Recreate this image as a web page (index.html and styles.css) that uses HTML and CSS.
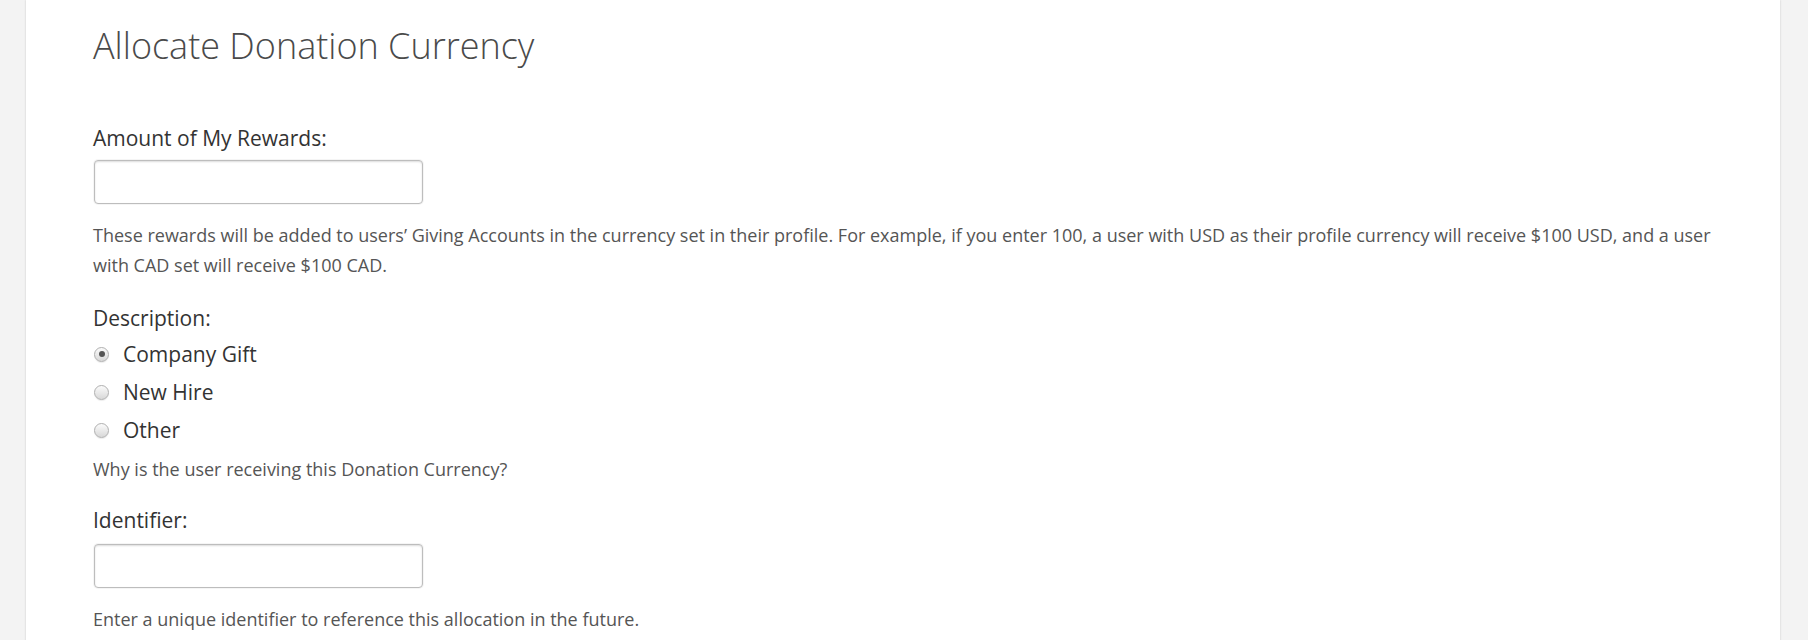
FILE: index.html
```html
<!DOCTYPE html>
<html lang="en">
<head>
<meta charset="utf-8">
<title>Allocate Donation Currency</title>
<link rel="stylesheet" href="styles.css">
</head>
<body>
<main class="panel">
  <h1 class="title">Allocate Donation Currency</h1>
  <form class="form">
    <div class="field">
      <label class="label" for="amount">Amount of My Rewards:</label>
      <input class="text-input" id="amount" type="text">
      <p class="help help-after-input">These rewards will be added to users’ Giving Accounts in the currency set in their profile. For example, if you enter 100, a user with USD as their profile currency will receive $100 USD, and a user with CAD set will receive $100 CAD.</p>
    </div>
    <div class="field field-desc">
      <div class="label">Description:</div>
      <ul class="radios">
        <li class="radio-row"><span class="radio checked"></span><span class="radio-label">Company Gift</span></li>
        <li class="radio-row"><span class="radio"></span><span class="radio-label">New Hire</span></li>
        <li class="radio-row"><span class="radio"></span><span class="radio-label">Other</span></li>
      </ul>
      <p class="help help-after-radios">Why is the user receiving this Donation Currency?</p>
    </div>
    <div class="field field-id">
      <label class="label" for="identifier">Identifier:</label>
      <input class="text-input" id="identifier" type="text">
      <p class="help help-after-input">Enter a unique identifier to reference this allocation in the future.</p>
    </div>
  </form>
</main>
</body>
</html>
```

FILE: styles.css
```css
html, body {
  margin: 0;
  padding: 0;
}
body {
  background: #f3f3f3;
  font-family: "Open Sans", "Noto Sans", sans-serif;
  color: #333;
  height: 640px;
  overflow: hidden;
}
.panel {
  margin: 0 28px 0 26px;
  background: #fff;
  box-shadow: 0 0 2px rgba(0, 0, 0, 0.18);
  padding: 26px 67px 40px;
  min-height: 640px;
  box-sizing: border-box;
}
.title {
  margin: 0;
  font-weight: 300;
  font-size: 36px;
  line-height: 40px;
  color: #4a4a4a;
}
.form {
  margin-top: 58px;
}
.field {
  display: flex;
  flex-direction: column;
  align-items: flex-start;
}
.label {
  font-size: 21px;
  line-height: 28px;
  color: #333;
}
.text-input {
  margin-top: 8px;
  margin-left: 1px;
  width: 329px;
  height: 44px;
  box-sizing: border-box;
  border: 1px solid #bdbdbd;
  border-radius: 4px;
  box-shadow: inset 0 1px 2px rgba(0, 0, 0, 0.14), 0 0 0 1px rgba(0, 0, 0, 0.04);
  background: #fff;
  font: inherit;
  font-size: 16px;
  padding: 0 10px;
}
.help {
  margin: 0;
  font-size: 18px;
  line-height: 30px;
  color: #555;
}
.help-after-input {
  margin-top: 16px;
}
.field-desc {
  margin-top: 24px;
}
.radios {
  list-style: none;
  margin: 3px 0 0;
  padding: 0;
}
.radio-row {
  display: flex;
  align-items: center;
  height: 38px;
}
.radio {
  width: 15px;
  height: 15px;
  box-sizing: border-box;
  border-radius: 50%;
  border: 1px solid #b0b0b0;
  background: linear-gradient(#fbfbfb, #d8d8d8);
  box-shadow: 0 1px 1px rgba(0, 0, 0, 0.08);
  margin-left: 1px;
  margin-right: 14px;
  display: flex;
  align-items: center;
  justify-content: center;
}
.radio.checked::after {
  content: "";
  width: 6px;
  height: 6px;
  border-radius: 50%;
  background: #555;
}
.radio-label {
  font-size: 21px;
  line-height: 28px;
  color: #333;
}
.help-after-radios {
  margin-top: 5px;
}
.field-id {
  margin-top: 22px;
}
.field-id .text-input {
  margin-top: 10px;
}
```
